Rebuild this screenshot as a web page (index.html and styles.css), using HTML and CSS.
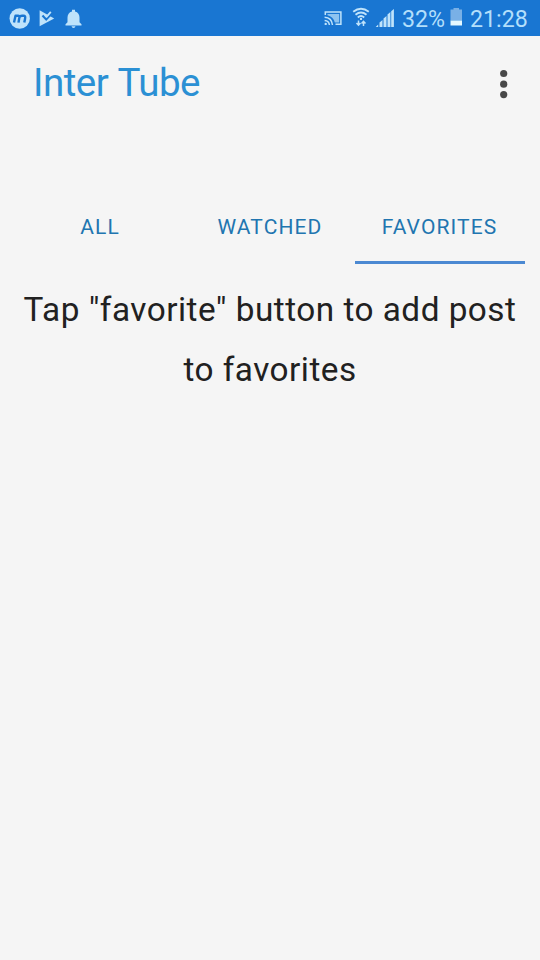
FILE: index.html
```html
<!DOCTYPE html>
<html lang="en">
<head>
<meta charset="utf-8">
<title>Inter Tube</title>
<link rel="stylesheet" href="styles.css">
</head>
<body>
<div class="status">
  <svg class="status-icons" width="90" height="36" viewBox="0 0 90 36" fill="#bfe3fb">
    <circle cx="19.700" cy="18.500" r="10.200"/>
    <path d="M14 22.600L15.500 15.800H17.500Q19.800 15.400 19.300 17.800L18.500 22.600M19.300 17.500Q20 15.800 22 15.800H23.500Q25.700 15.800 25.100 18.500L24.300 22.600" fill="none" stroke="#1976d2" stroke-width="2.400" stroke-linejoin="round"/>
    <path d="M39.600 10.300L54.200 18.500L39.600 26.300Z"/>
    <path d="M42.500 15.500L46.200 19.400L53 12" fill="none" stroke="#1976d2" stroke-width="2.200"/>
    <path d="M45 15.200L46.700 16.700L50.800 11.800" fill="none" stroke="#bfe3fb" stroke-width="1.800"/>
    <path d="M72 9.800h3v1.800c3 .7 4.500 3 4.500 6v4.700l2 2v1.300H65.500v-1.300l2-2v-4.700c0-3 1.500-5.300 4.500-6zM71.500 26.300h4q-.4 1.800-2 1.800t-2-1.800z"/>
  </svg>
  <div class="status-right">
    <svg class="status-icons" width="78" height="36" viewBox="0 0 78 36" fill="none" stroke="#bfe3fb">
      <path d="M5.300 15V12H20.900V24.300H15.500" stroke-width="1.500"/>
      <path d="M7.500 14H19.200V22.400H14.800Q13.200 16.500 7.500 15.200Z" fill="#8dc3f0" stroke="none"/>
      <path d="M4.600 17.200Q11.800 17.600 12.500 25M4.600 20.400Q9 20.700 9.400 25" stroke-width="1.500"/>
      <circle cx="5.700" cy="23.900" r="1.200" fill="#bfe3fb" stroke="none"/>
      <path d="M33.200 11.800Q41 5.800 48.800 11.800M35.500 14.700Q41 10.300 46.500 14.700M37.800 17.400Q41 14.800 44.200 17.400" stroke-width="1.900"/>
      <circle cx="41" cy="18.900" r="1.200" fill="#bfe3fb" stroke="none"/>
      <path d="M38.500 20.500V25M36.500 23L38.500 25.200L40.500 23M43.500 26V21.500M41.500 23.500L43.500 21.300L45.500 23.500" stroke-width="1.500"/>
      <path d="M55.700 27L58.200 24.500V27ZM59.500 22.500L62.500 20V27H59.500ZM63.500 18.500L66.500 16V27H63.500ZM67.500 14.500L70.400 12V27H67.500ZM71.200 11.200L73.900 9V27H71.200Z" fill="#bfe3fb" stroke="none"/>
    </svg>
    <span class="percent">32%</span>
    <svg class="battery" width="13" height="18" viewBox="0 0 13 18">
      <path d="M.5 1.500H3.500V0H9V1.500H12V12.500H.5Z" fill="#79b0e6"/>
      <path d="M.5 12.500H12V17.500H.5Z" fill="#e5f8ff"/>
    </svg>
    <span class="time">21:28</span>
  </div>
</div>
<header class="toolbar">
  <h1 class="title">Inter Tube</h1>
  <svg class="more" width="10" height="30" viewBox="0 0 10 30" fill="#484848">
    <circle cx="4.700" cy="4.500" r="3.600"/><circle cx="4.700" cy="15.200" r="3.600"/><circle cx="4.700" cy="25.600" r="3.600"/>
  </svg>
</header>
<nav class="tabs">
  <div class="tab">ALL</div>
  <div class="tab">WATCHED</div>
  <div class="tab active">FAVORITES</div>
</nav>
<main class="message">Tap "favorite" button to add post<br>to favorites</main>
</body>
</html>
```

FILE: styles.css
```css
* { box-sizing: border-box; }
body {
  margin: 0;
  height: 960px;
  overflow: hidden;
  background: #f5f5f5;
  font-family: Roboto, sans-serif;
}
.status {
  height: 36px;
  background: #1976d2;
  display: flex;
  justify-content: space-between;
  color: #b3dffb;
  font-size: 23.200px;
  line-height: 38px;
}
.status-icons { display: block; }
.status-right { display: flex; width: 220px; }
.percent { width: 42px; margin-left: 4px; }
.battery { margin: 8px 7px 0 6px; }
.toolbar {
  height: 154px;
  padding: 16px 31px 0 33px;
  display: flex;
  justify-content: space-between;
}
.title {
  margin: 0;
  font-size: 38.500px;
  font-weight: 400;
  line-height: 62px;
  letter-spacing: -.5px;
  word-spacing: 1px;
  color: #2b90d4;
}
.more { margin-top: 17px; }
.tabs {
  height: 74px;
  padding: 0 15px;
  display: grid;
  grid-template-columns: repeat(3, 1fr);
  grid-template-rows: 74px;
}
.tab {
  line-height: 74px;
  font-size: 21px;
  letter-spacing: 1.100px;
  text-align: center;
  color: #2175b0;
}
.active { border-bottom: 3px solid #4b89d2; padding-right: 1px; }
.message {
  padding-top: 16px;
  font-size: 33.300px;
  line-height: 60px;
  letter-spacing: .5px;
  text-align: center;
  white-space: nowrap;
  color: #212121;
}
```
